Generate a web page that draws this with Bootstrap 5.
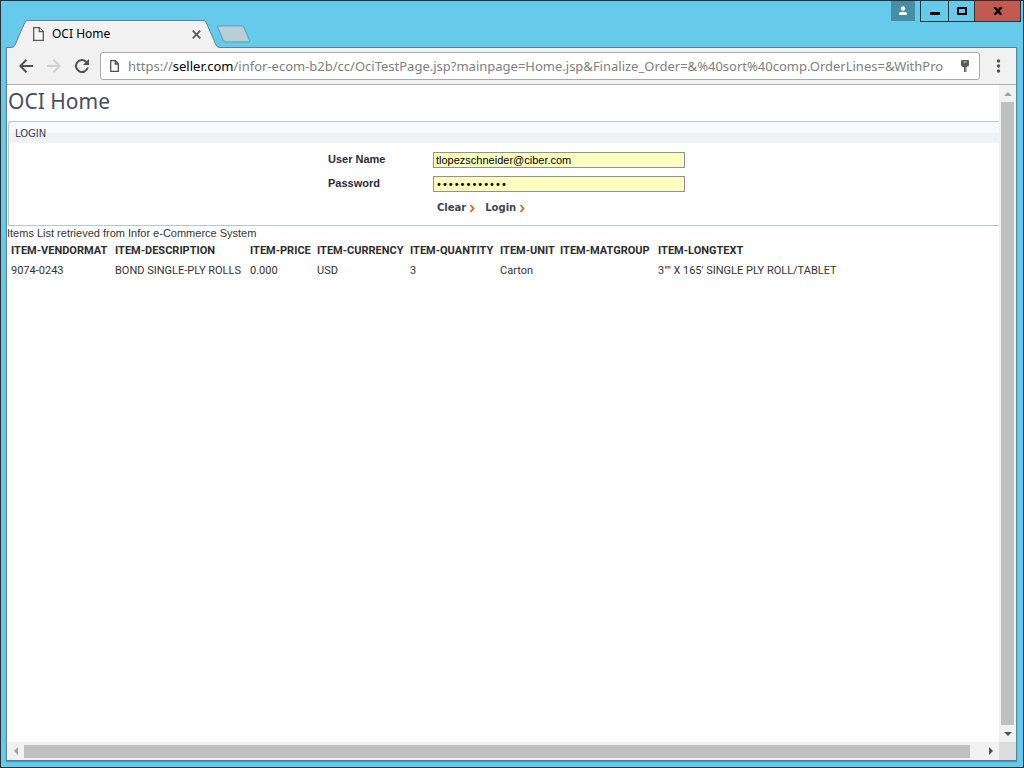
<!DOCTYPE html>
<html lang="en">
<head>
<meta charset="utf-8">
<meta name="viewport" content="width=device-width, initial-scale=1">
<title>OCI Home</title>
<link href="https://cdn.jsdelivr.net/npm/bootstrap@5.3.0/dist/css/bootstrap.min.css" rel="stylesheet">
<style>
body { font-family: "Liberation Sans", Arial, sans-serif; font-size: 11px; line-height: 16px; color: #333; }
button { border: 0; padding: 0; background: none; }
svg { display: block; flex: none; }
.desktop { background: #66caea; border: 1px solid #2f3033; padding: 0 6px 6px 5px; }
.ui-font { font-family: "Noto Sans", sans-serif; }

.title-row { height: 46px; }
.tab-shape { width: 205px; height: 28px; margin-left: 1px; margin-bottom: -1px; z-index: 1; }
.tab-shape > svg { position: absolute; inset: 0; }
.tab-label { padding: 0 11px 0 26px; font-size: 12px; color: #000; }
.win-buttons { margin-right: -4px; }
.win-buttons button { height: 21px; border: 1px solid #26343b; border-top: 0; border-left: 0; display: flex; align-items: center; justify-content: center; }
.win-buttons .user-btn { width: 24px; height: 20px; background: #478da5; border: 0; margin-right: 5px; }
.win-buttons .min-btn { width: 29px; border-left: 1px solid #26343b; }
.win-buttons .max-btn { width: 26px; }
.win-buttons .close-btn { width: 46px; background: #c3594f; }

.browser { border: 1px solid #5c8496; border-bottom-color: #477c91; box-shadow: 0 1px 1px #4a9db8; background: #f1f1f1; }
.toolbar { height: 37px; border-bottom: 1px solid #b0b0b0; padding: 0 12px; }
.nav-buttons { gap: 14px; }
.omnibox { height: 28px; border: 1px solid #a8a8a8; border-radius: 3px; background: #fff; padding: 0 9px; margin: 0 13px 0 11px; min-width: 0; }
.url { font-size: 13px; line-height: 20px; color: #808080; white-space: nowrap; overflow: hidden; min-width: 0; margin: 0 9px; }
.url b { font-weight: 400; color: #000; }

.page { background: #fff; min-width: 0; overflow: hidden; }
.page h1 { font-family: "Noto Sans", sans-serif; font-size: 21px; line-height: 32px; font-weight: 400; color: #4a4f5b; margin: 0 0 4px 1px; }
.login-panel { height: 105px; border: 1px solid #b4c8d0; border-right: 0; border-radius: 4px 0 0 0; margin-left: 1px; }
.login-panel h2 { font-family: "DejaVu Sans", sans-serif; font-size: 10px; line-height: 21px; font-weight: 400; color: #3a3f49; margin: 0 0 9px; padding: 1px 0 0 6px; background: linear-gradient(#f8f9fb 50%, #f0f2f6 50%); border-radius: 4px 0 0 0; height: 21px; }
.login-form { width: 357px; margin: 0 auto; transform: none; }
.login-form label { width: 105px; font-weight: 700; color: #272c36; line-height: 15px; }
.login-form input { flex: 1; min-width: 0; height: 16px; border: 1px solid #8d9199; border-radius: 0; background: #faffbd; padding: 0 2px; color: #000; font-size: 11px; line-height: 14px; }
.login-form input[type=password] { font-family: "DejaVu Sans", sans-serif; font-size: 10px; }
.login-form .field-row { margin-bottom: 8px; }
.form-body { padding-left: 5px; }
.form-actions { padding-left: 109px; gap: 10px; }
.form-actions button { font-family: "DejaVu Sans", sans-serif; font-size: 10px; font-weight: 700; color: #3f4652; line-height: 16px; display: flex; align-items: center; gap: 4px; }
.items-caption { line-height: 15px; }
.items-table { width: 100%; table-layout: fixed; margin-left: 4px; }
.items-table th, .items-table td { font-family: Roboto, "Liberation Sans", sans-serif; padding: 2px 0; line-height: 16px; white-space: nowrap; }
.items-table th { color: #2d2d2d; }

.v-scroll { width: 17px; background: #f1f1f1; }
.h-scroll { height: 18px; background: #f1f1f1; }
.scroll-btn { width: 17px; height: 17px; display: flex; align-items: center; justify-content: center; flex: none; }
.thumb { background: #c0c0c0; flex: 1; }
.v-scroll .thumb { width: 13px; }
.h-scroll .thumb { height: 13px; margin-right: 12px; }
.scroll-corner { width: 17px; height: 18px; background: #dcdcdc; }
</style>
</head>
<body>
<div class="desktop vh-100 d-flex flex-column">
  <header class="title-row d-flex align-items-end">
    <div class="tab-shape ui-font position-relative d-flex align-items-center">
      <svg width="213" height="28" viewBox="0 0 213 28"><path d="M0 27.5H4Q7 27.5 8 25L18 2Q19 .5 21 .5H196Q198 .5 199 2L209 25Q210 27.5 213 27.5V28H0Z" fill="#f1f1f1"/><path d="M0 27.5H4Q7 27.5 8 25L18 2Q19 .5 21 .5H196Q198 .5 199 2L209 25Q210 27.5 213 27.5" fill="none" stroke="#55869b"/></svg>
      <div class="tab-label position-relative d-flex align-items-center w-100">
        <svg width="11" height="14" viewBox="0 0 11 14" fill="#f8f8f8" stroke="#5a5a5a" stroke-width="1.3"><path d="M.7.7H6.5L10.3 4.5V13.3H.7Z"/><path d="M6.3.7V4.7H10.3"/></svg>
        <span class="ms-2 me-auto">OCI Home</span>
        <button type="button" aria-label="Close tab"><svg width="9" height="9" viewBox="0 0 9 9" stroke="#5a5a5a" stroke-width="1.8"><path d="M.7.7 8.3 8.3M8.3.7.7 8.3"/></svg></button>
      </div>
    </div>
    <button type="button" class="ms-1 mb-1" aria-label="New tab"><svg width="36" height="18" viewBox="0 0 36 18"><path d="M3 .8H25Q27 .8 28 2.5L33.4 15Q34 16.8 32 16.8H10Q8 16.8 7 15L1.8 2.5Q1.2.8 3 .8Z" fill="#b9cfd7" stroke="#62a8c0" stroke-width="1.3"/></svg></button>
    <div class="win-buttons ms-auto d-flex align-self-start">
      <button type="button" class="user-btn" aria-label="User"><svg width="10" height="10" viewBox="0 0 10 10" fill="#fff"><circle cx="5" cy="2.5" r="2.2"/><path d="M1 9V7.5Q1 5.7 5 5.7T9 7.5V9Z"/></svg></button>
      <button type="button" class="min-btn" aria-label="Minimize"><svg width="10" height="9"><path d="M0 5h10v3H0z"/></svg></button>
      <button type="button" class="max-btn" aria-label="Maximize"><svg width="10" height="8"><path d="M1 1h8v6H1z" fill="none" stroke="#000" stroke-width="2"/></svg></button>
      <button type="button" class="close-btn" aria-label="Close"><svg width="10" height="8" viewBox="0 0 10 8"><path d="M1.5 0 8.5 8M8.5 0 1.5 8" stroke="#000" stroke-width="2.4"/></svg></button>
    </div>
  </header>

  <div class="browser flex-grow-1 d-flex flex-column">
    <div class="toolbar d-flex align-items-center">
      <div class="nav-buttons d-flex align-items-center">
        <button type="button" aria-label="Back"><svg width="14" height="14" viewBox="0 0 14 14" fill="none" stroke="#505050" stroke-width="2"><path d="M14 7H1.5M7.5.8 1.3 7 7.5 13.2"/></svg></button>
        <button type="button" aria-label="Forward"><svg width="14" height="14" viewBox="0 0 14 14" fill="none" stroke="#d0d0d0" stroke-width="2"><path d="M0 7H12.5M6.5.8 12.7 7 6.5 13.2"/></svg></button>
        <button type="button" aria-label="Reload"><svg width="14" height="14" viewBox="0 0 14 14"><path d="M11.5 3A6 6 0 1 0 12.8 8.6" fill="none" stroke="#505050" stroke-width="2"/><path d="M14 0V6H8Z" fill="#505050"/></svg></button>
      </div>
      <div class="omnibox ui-font d-flex align-items-center flex-grow-1">
        <svg width="9" height="12" viewBox="0 0 9 12" fill="none" stroke="#505050" stroke-width="1.3"><path d="M.7.7H5.5L8.3 3.7V11.3H.7Z"/><path d="M5.3.7V4H8.3"/></svg>
        <div class="url flex-grow-1" role="textbox" contenteditable="true" spellcheck="false" aria-label="Address">https://<b>seller.com</b>/infor-ecom-b2b/cc/OciTestPage.jsp?mainpage=Home.jsp&amp;Finalize_Order=&amp;%40sort%40comp.OrderLines=&amp;WithPro</div>
        <svg width="10" height="13" viewBox="0 0 10 13"><path d="M2 0H8Q9 0 9 1V5Q9 6.5 7 6.5V7H6.5V12H4V7H3Q1 6.5 1 5V1Q1 0 2 0Z" fill="#5a5a5a"/><path d="M3.5 2H6.5" stroke="#ddd"/><path d="M6 7V12" stroke="#bbb"/></svg>
      </div>
      <button type="button" aria-label="Menu"><svg width="11" height="14" viewBox="0 0 11 14" fill="#505050"><circle cx="5.5" cy="2" r="1.7"/><circle cx="5.5" cy="7" r="1.7"/><circle cx="5.5" cy="12" r="1.7"/></svg></button>
    </div>

    <div class="d-flex flex-grow-1">
      <main class="page flex-grow-1">
        <h1>OCI Home</h1>
        <section class="login-panel">
          <h2>LOGIN</h2>
          <div class="form-body">
          <form class="login-form">
            <div class="field-row d-flex">
              <label for="user">User Name</label>
              <input id="user" type="text" value="tlopezschneider@ciber.com">
            </div>
            <div class="field-row d-flex">
              <label for="pass">Password</label>
              <input id="pass" type="password" value="abcdefghijkl">
            </div>
            <div class="form-actions d-flex">
              <button type="reset">Clear <svg width="5" height="7" viewBox="0 0 5 7"><path d="M.5 0 3.5 3.5.5 7" fill="none" stroke="#e0640f" stroke-width="1.8"/></svg></button>
              <button type="button">Login <svg width="5" height="7" viewBox="0 0 5 7"><path d="M.5 0 3.5 3.5.5 7" fill="none" stroke="#e0640f" stroke-width="1.8"/></svg></button>
            </div>
          </form>
          </div>
        </section>
        <div class="items-caption">Items List retrieved from Infor e-Commerce System</div>
        <table class="items-table">
          <colgroup><col style="width:104px"><col style="width:135px"><col style="width:67px"><col style="width:93px"><col style="width:90px"><col style="width:60px"><col style="width:98px"><col></colgroup>
          <thead><tr><th>ITEM-VENDORMAT</th><th>ITEM-DESCRIPTION</th><th>ITEM-PRICE</th><th>ITEM-CURRENCY</th><th>ITEM-QUANTITY</th><th>ITEM-UNIT</th><th>ITEM-MATGROUP</th><th>ITEM-LONGTEXT</th></tr></thead>
          <tbody><tr><td>9074-0243</td><td>BOND SINGLE-PLY ROLLS</td><td>0.000</td><td>USD</td><td>3</td><td>Carton</td><td></td><td>3"" X 165' SINGLE PLY ROLL/TABLET</td></tr></tbody>
        </table>
      </main>
      <div class="v-scroll d-flex flex-column align-items-center">
        <div class="scroll-btn"><svg width="8" height="4"><path d="M0 4 4 0 8 4Z" fill="#a0a0a0"/></svg></div>
        <div class="thumb"></div>
        <div class="scroll-btn"><svg width="8" height="4"><path d="M0 0 4 4 8 0Z" fill="#505050"/></svg></div>
      </div>
    </div>
    <div class="d-flex">
      <div class="h-scroll d-flex align-items-center flex-grow-1">
        <div class="scroll-btn"><svg width="4" height="8"><path d="M4 0 0 4 4 8Z" fill="#a0a0a0"/></svg></div>
        <div class="thumb"></div>
        <div class="scroll-btn"><svg width="4" height="8"><path d="M0 0 4 4 0 8Z" fill="#505050"/></svg></div>
      </div>
      <div class="scroll-corner"></div>
    </div>
  </div>
</div>
<script src="https://cdn.jsdelivr.net/npm/bootstrap@5.3.0/dist/js/bootstrap.bundle.min.js"></script>
</body>
</html>
